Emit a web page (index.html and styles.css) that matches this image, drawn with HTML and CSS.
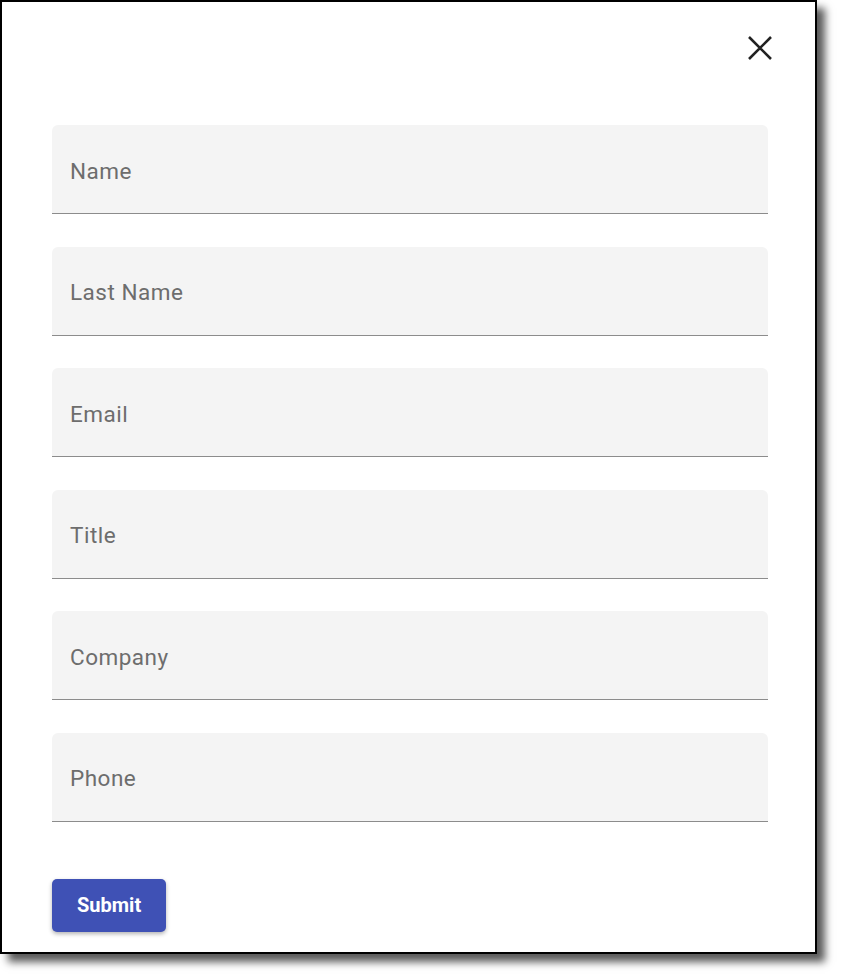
FILE: index.html
```html
<!DOCTYPE html>
<html>

<head>
  <meta charset="utf-8">
  <meta name="viewport" content="width=device-width">
  <title>Contact form</title>
  <link rel="stylesheet" href="styles.css">
</head>

<body>
  <div class="dialog">
    <div class="dialog-head">
      <span class="close" aria-label="Close">
        <svg width="24" height="24" viewBox="0 0 24 24">
          <path d="M1 1 L23 23 M23 1 L1 23" stroke="#222" stroke-width="2.6" fill="none" />
        </svg>
      </span>
    </div>
    <div class="fields">
      <div class="field"><span>Name</span></div>
      <div class="field"><span>Last Name</span></div>
      <div class="field"><span>Email</span></div>
      <div class="field"><span>Title</span></div>
      <div class="field"><span>Company</span></div>
      <div class="field"><span>Phone</span></div>
    </div>
    <span class="submit">Submit</span>
  </div>
</body>

</html>
```

FILE: styles.css
```css
* {
  margin: 0;
  box-sizing: border-box;
}

html,
body {
  min-height: 979px;
}

body {
  font-family: Roboto, "Liberation Sans", sans-serif;
  background: #fff;
}

/* 弹窗外框 */
.dialog {
  width: 817px;
  height: 954px;
  border: 2px solid #000;
  padding: 22px 47px 20px 50px;
  box-shadow: 8px 8px 8px rgba(0, 0, 0, .65);
  display: flex;
  flex-direction: column;
}

.dialog-head {
  display: flex;
  justify-content: flex-end;
}

.close {
  width: 48px;
  height: 48px;
  margin-right: -16px;
  display: flex;
  align-items: center;
  justify-content: center;
}

/* 输入框 */
.fields {
  margin-top: 53px;
  display: flex;
  flex-direction: column;
  gap: 32.5px;
}

.field {
  height: 89px;
  background-color: #f4f4f4;
  border-bottom: 1px solid #8c8c8c;
  border-radius: 6px 6px 0 0;
  padding-left: 18px;
  padding-top: 3px;
  display: flex;
  align-items: center;
}

.field span {
  font-size: 22.5px;
  font-weight: 400;
  letter-spacing: .5px;
  color: #6d6d6d;
}

/* 提交按钮 */
.submit {
  align-self: flex-start;
  margin-top: 57px;
  height: 54px;
  padding: 0 25px;
  display: flex;
  align-items: center;
  background-color: #3f51b5;
  color: #fff;
  font-size: 20px;
  font-weight: 700;
  border-radius: 5px;
  box-shadow: 0 2px 4px rgba(0, 0, 0, .3);
}
```
